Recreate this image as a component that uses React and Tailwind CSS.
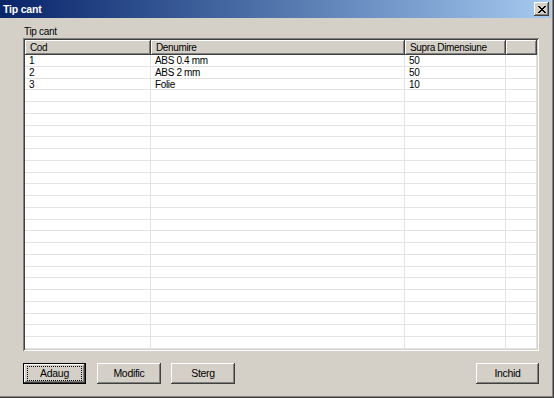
import React from "react"

const font = { fontFamily: '"Liberation Sans", Arial, sans-serif' }

const columns = [
  { title: "Cod", w: "w-[126px]" },
  { title: "Denumire", w: "w-[254px]" },
  { title: "Supra Dimensiune", w: "w-[101px]" },
  { title: "", w: "flex-1" },
]

const data = [
  ["1", "ABS 0.4 mm", "50"],
  ["2", "ABS 2 mm", "50"],
  ["3", "Folie", "10"],
]

function Button({ label, isDefault, width = "w-[64px]" }) {
  if (isDefault) {
    return (
      <div className={`${width} h-[21px] border border-black`}>
        <div className="relative w-full h-full bg-[#d4d0c8] shadow-[inset_-1px_-1px_#404040,inset_1px_1px_#ffffff,inset_-2px_-2px_#808080] flex items-center justify-center text-[10.5px] tracking-[-0.3px] leading-none text-black">
          <div className="absolute left-[3px] right-[3px] top-[2px] bottom-[2px] border border-dotted border-black" />
          <span className="-mt-[1px]">{label}</span>
        </div>
      </div>
    )
  }
  return (
    <div
      className={`${width} h-[21px] bg-[#d4d0c8] shadow-[inset_-1px_-1px_#404040,inset_1px_1px_#ffffff,inset_-2px_-2px_#808080,inset_2px_2px_#d4d0c8] flex items-center justify-center text-[10.5px] tracking-[-0.3px] leading-none text-black`}
    >
      <span className="-mt-[1px]">{label}</span>
    </div>
  )
}

export default function App() {
  const rows = Array.from({ length: 25 }, (_, i) => data[i] || ["", "", ""])

  return (
    <div
      style={font}
      className="w-[554px] h-[398px] bg-[#d4d0c8] flex flex-col overflow-hidden shadow-[inset_-1px_-1px_#404040,inset_-2px_-2px_#808080]"
    >
      {/* title bar */}
      <div className="h-[18px] mr-[3px] bg-gradient-to-r from-[#0a246a] to-[#a6caf0] flex items-center justify-between pl-[3px] pr-[2px]">
        <span className="text-white font-bold text-[10.5px] tracking-[-0.2px] leading-none">Tip cant</span>
        <div className="w-[15px] h-[14px] bg-[#d4d0c8] shadow-[inset_-1px_-1px_#404040,inset_1px_1px_#ffffff,inset_-2px_-2px_#808080] flex items-center justify-center">
          <svg width="8" height="7" viewBox="0 0 8 7" shapeRendering="crispEdges">
            <path d="M0 0h2v1h-2zM6 0h2v1h-2zM1 1h2v1h-2zM5 1h2v1h-2zM2 2h4v1h-4zM3 3h2v1h-2zM2 4h4v1h-4zM1 5h2v1h-2zM5 5h2v1h-2zM0 6h2v1h-2zM6 6h2v1h-2z" fill="#000" />
          </svg>
        </div>
      </div>

      <div className="pl-[23px]">
        <div className="mt-[8px] h-[12px] text-[10px] tracking-[-0.3px] leading-[12px] text-black pl-[1px]">Tip cant</div>

        {/* grid */}
        <div className="w-[516px] p-[2px] bg-white shadow-[inset_1px_1px_#808080,inset_-1px_-1px_#ffffff,inset_2px_2px_#404040,inset_-2px_-2px_#d4d0c8]">
          <div className="flex h-[15px]">
            {columns.map((c, i) => (
              <div
                key={i}
                className={`${c.w} h-full bg-[#d4d0c8] shadow-[inset_-1px_-1px_#404040,inset_1px_1px_#ffffff,inset_-2px_-2px_#808080] text-[10px] tracking-[-0.35px] leading-[15px] text-black pl-[5px] whitespace-nowrap overflow-hidden`}
              >
                {c.title}
              </div>
            ))}
          </div>
          <div className="flex flex-col">
            {rows.map((r, i) => (
              <div key={i} className="flex h-[11.75px] border-b border-[#e3e3e3]">
                {columns.map((c, j) => (
                  <div
                    key={j}
                    className={`${c.w} h-full border-r border-[#e3e3e3] text-[10px] tracking-[-0.35px] leading-[11px] text-black pl-[4px] whitespace-nowrap overflow-hidden`}
                  >
                    {r[j] || ""}
                  </div>
                ))}
              </div>
            ))}
          </div>
        </div>

        {/* buttons */}
        <div className="mt-[12px] w-[516px] flex items-center">
          <Button label="Adaug" isDefault width="w-[63px]" />
          <div className="ml-[11px]">
            <Button label="Modific" />
          </div>
          <div className="ml-[10px]">
            <Button label="Sterg" />
          </div>
          <div className="ml-auto">
            <Button label="Inchid" width="w-[63px]" />
          </div>
        </div>
      </div>
    </div>
  )
}
